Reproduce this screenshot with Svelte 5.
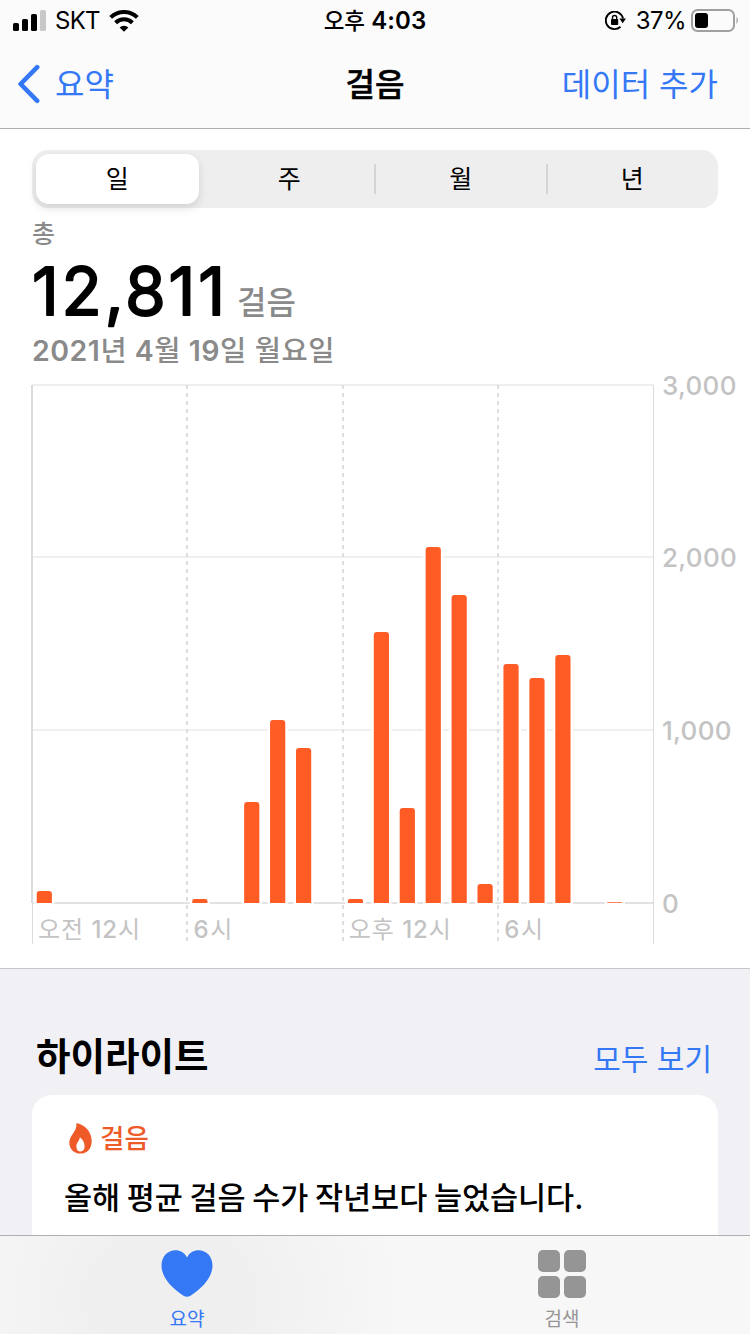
<script lang="ts">
  const ranges = ['일', '주', '월', '년'];
  let selected = $state(0);

  // steps per hour, starting at midnight
  const steps = [
    70, 0, 0, 0, 0, 0, 23, 0, 585, 1060, 898, 0,
    23, 1570, 550, 2062, 1784, 110, 1384, 1303, 1436, 0, 5, 0
  ];
  const ticks = [3000, 2000, 1000, 0];
  const hours = [
    { at: 0, num: '12', before: '오전', width: 102 },
    { at: 6, num: '6', before: '', width: 39 },
    { at: 12, num: '12', before: '오후', width: 102 },
    { at: 18, num: '6', before: '', width: 39 }
  ];

  const left = 32;
  const right = 653.5;
  const base = 525;
  const hourX = (h: number) => left + h * 25.9;
  const stepY = (n: number) => base - (n * 518) / 3000;

  function barPath(h: number, n: number) {
    const x = 36.7 + h * 25.93;
    const w = 15.2;
    const y = stepY(n);
    const r = Math.min(3, (base - y) / 2);
    return `M${x} ${base}V${y + r}q0 ${-r} ${r} ${-r}h${w - 2 * r}q${r} 0 ${r} ${r}V${base}z`;
  }

  const bars = steps.map((n, h) => ({ n, d: barPath(h, n) })).filter((b) => b.n > 0);
</script>

<div class="screen">
  <header>
    <div class="status">
      <div class="side">
        <svg width="34" height="22" viewBox="0 0 34 22">
          <rect x="0" y="13" width="6" height="8" rx="1.6" />
          <rect x="9" y="9" width="6" height="12" rx="1.6" />
          <rect x="18" y="4" width="6" height="17" rx="1.6" />
          <rect x="27" y="0" width="6" height="21" rx="1.6" fill="#c8c8c8" />
        </svg>
        <span class="carrier">SKT</span>
        <svg class="wifi" width="30" height="22" viewBox="0 0 30 22">
          <path d="M1.7 7.4a19 19 0 0 1 26.6 0" fill="none" stroke="#000" stroke-width="4" />
          <path d="M6.6 12.7a12 12 0 0 1 16.8 0" fill="none" stroke="#000" stroke-width="4" />
          <path d="M10.6 17.4a6.4 6.4 0 0 1 8.8 0L15 21.8z" />
        </svg>
      </div>
      <div class="time"><span>오후</span> 4:03</div>
      <div class="side end">
        <svg width="21" height="20" viewBox="0 0 21 20">
          <path d="M15.5 15.7A8.7 8.7 0 1 1 18 7.5" fill="none" stroke="#000" stroke-width="1.9" />
          <path d="M14.4 7.4h6.6l-3.3 4.8z" />
          <rect x="6" y="8" width="7.2" height="6" rx="0.8" />
          <path d="M7.5 8.5V6.6a2.1 2.1 0 0 1 4.2 0V8.5" fill="none" stroke="#000" stroke-width="1.4" />
        </svg>
        <span class="percent">37%</span>
        <svg width="48" height="24" viewBox="0 0 48 24">
          <rect x="1" y="1" width="42" height="21" rx="5.5" fill="none" stroke="#a0a0a0" stroke-width="2" />
          <rect x="4" y="4" width="13" height="15" rx="3" />
          <path d="M45.5 8a5 5 0 0 1 0 7z" fill="#a0a0a0" />
        </svg>
      </div>
    </div>
    <nav>
      <button class="back">
        <svg width="24" height="40" viewBox="0 0 24 40">
          <path d="M20.2 3.2L3.6 20l16.6 16.8" fill="none" stroke="#3478f6" stroke-width="4.6" stroke-linecap="round" stroke-linejoin="round" />
        </svg>
        <span>요약</span>
      </button>
      <h1>걸음</h1>
      <button class="add">데이터 추가</button>
    </nav>
  </header>

  <main>
    <section class="summary">
      <div class="segments">
        {#each ranges as label, i}
          <button
            class:active={i === selected}
            class:divided={i > 1 && i !== selected + 1}
            onclick={() => (selected = i)}>{label}</button>
        {/each}
      </div>
      <div class="caption">총</div>
      <div class="total">
        <svg width="194" height="66" viewBox="0 0 194 66">
          <text x="0" y="57" textLength="193">12,811</text>
        </svg>
        <span>걸음</span>
      </div>
      <div class="date">2021<b>년</b> 4<b>월</b> 19<b>일 월요일</b></div>
    </section>

    <svg class="chart" width="750" height="590" viewBox="0 0 750 590">
      {#each ticks as t}
        <path d="M{left} {Math.round(stepY(t) - 0.2)}H{right}" stroke={t === 0 ? '#e2e2e2' : '#efefef'} stroke-width="2" />
        <text class="tick" x="662" y={Math.round(stepY(t) - 0.2) + 10}>{t.toLocaleString('en-US')}</text>
      {/each}
      <path d="M32 7V525" stroke="#dcdcdc" stroke-width="2" />
      <path d="M32.5 525V566" stroke="#dcdcdc" />
      <path d="M653.5 7V566" stroke="#dcdcdc" />
      {#each hours as hour}
        {#if hour.at > 0}
          <path d="M{Math.round(hourX(hour.at))} 7V563" stroke="#dedede" stroke-width="2" stroke-dasharray="4 4" />
        {/if}
        <text class="hour" x={hourX(hour.at) + 6} y="560" textLength={hour.width}>
          {#if hour.before}{hour.before + ' '}{/if}<tspan class="num">{hour.num}</tspan>시</text>
      {/each}
      {#each bars as bar}
        <path d={bar.d} fill="#fff" stroke="#fff" stroke-width="5" />
        <path d={bar.d} fill="#ff5b25" />
      {/each}
    </svg>

    <section class="highlights">
      <div class="heading">
        <h2>하이라이트</h2>
        <button>모두 보기</button>
      </div>
      <article>
        <div class="topic">
          <svg width="23" height="31" viewBox="0 0 23 31">
            <path fill-rule="evenodd" d="M8.5 0.3C16 2 22.7 9 22.7 18C22.7 26 18 30.6 11.4 30.6C4.8 30.6 0.3 26 0.3 19.5C0.3 12.5 8 8.5 7.4 1.3Q7.4 0 8.5 0.3ZM10.9 14.3C10.6 17.8 7.4 19.5 7.4 23.5C7.4 26.7 9 28.5 11.5 28.5C14 28.5 15.6 26.5 15.6 23.3C15.6 19.5 13.5 16.3 10.9 14.3Z" fill="#ee5a28" />
          </svg>
          <span>걸음</span>
        </div>
        <p>올해 평균 걸음 수가 작년보다 늘었습니다.</p>
      </article>
    </section>
  </main>

  <footer>
    <button class="tab current">
      <svg width="52" height="48" viewBox="0 0 52 48">
        <path d="M26 7.5C23.5 2.8 19.2 0.3 14.5 0.3C6.5 0.3 0.5 6.8 0.5 15.5C0.5 28 11.5 38.5 22.5 45.7Q26 48 29.5 45.7C40.5 38.5 51.5 28 51.5 15.5C51.5 6.8 45.5 0.3 37.5 0.3C32.8 0.3 28.5 2.8 26 7.5Z" fill="#3478f6" />
      </svg>
      <span>요약</span>
    </button>
    <button class="tab">
      <svg width="48" height="48" viewBox="0 0 48 48" fill="#959595">
        <rect width="22" height="22" rx="5" />
        <rect x="26" width="22" height="22" rx="5" />
        <rect y="26" width="22" height="22" rx="5" />
        <rect x="26" y="26" width="22" height="22" rx="5" />
      </svg>
      <span>검색</span>
    </button>
  </footer>
</div>

<style>
  :global(body) {
    margin: 0;
    overflow: hidden;
  }

  .screen {
    display: flex;
    flex-direction: column;
    width: 750px;
    height: 1334px;
    overflow: hidden;
    background: #f1f0f5;
    color: #000;
    font-family: Inter, 'Noto Sans CJK KR', sans-serif;
  }

  svg {
    display: block;
    flex: none;
  }

  button {
    padding: 0;
    border: 0;
    background: none;
    color: #3478f6;
    font: inherit;
    cursor: pointer;
  }

  h1, h2, p {
    margin: 0;
  }

  header {
    flex: none;
    box-sizing: border-box;
    height: 129px;
    border-bottom: 1px solid #b0b0b0;
    background: #fbfbfb;
  }

  .status {
    display: grid;
    grid-template-columns: 1fr auto 1fr;
    align-items: center;
    height: 40px;
    padding: 0 11px 0 13px;
    font-size: 24px;
    line-height: 40px;
  }

  .side {
    display: flex;
    align-items: center;
  }

  .end {
    justify-content: flex-end;
  }

  .carrier {
    margin-left: 8px;
    padding-top: 1px;
    letter-spacing: -0.7px;
  }

  .wifi {
    margin-left: 9px;
  }

  .time {
    padding: 1px 2px 0 0;
    font-weight: 600;
    letter-spacing: 0.1px;
  }

  .time span {
    font-size: 22.5px;
    font-weight: 500;
    letter-spacing: 0;
  }

  .percent {
    margin: 0 5px 0 10px;
    padding-top: 1px;
    letter-spacing: -0.6px;
  }

  nav {
    display: grid;
    grid-template-columns: 1fr auto 1fr;
    align-items: center;
    height: 88px;
    padding: 0 32px 0 17px;
    font-size: 32px;
    line-height: 86px;
  }

  .back {
    display: flex;
    align-items: center;
    gap: 14px;
  }

  .back span,
  .add {
    padding-top: 1px;
  }

  h1 {
    padding: 2px 0 0 15px;
    font-size: 32px;
    font-weight: 500;
    -webkit-text-stroke: 0.5px;
  }

  .add {
    justify-self: end;
  }

  main {
    flex: 1;
    min-height: 0;
    overflow: hidden;
  }

  .summary {
    height: 249px;
    padding: 21px 32px 0;
    box-sizing: border-box;
    background: #fff;
    color: #8a8a8a;
  }

  .segments {
    display: grid;
    grid-template-columns: repeat(4, 1fr);
    height: 58px;
    border-radius: 16px;
    background: #eee;
  }

  .segments button {
    display: flex;
    align-items: center;
    justify-content: center;
    color: #000;
    font-size: 25px;
    line-height: 50px;
  }

  .segments .active {
    margin: 4px 5px 4px 4px;
    border-radius: 13px;
    background: #fff;
    box-shadow: 0 4px 10px rgba(0, 0, 0, 0.12);
  }

  .divided::before {
    content: '';
    width: 2px;
    height: 30px;
    margin-left: -1px;
    margin-right: auto;
    background: #d5d5d5;
  }

  .divided::after {
    content: '';
    width: 1px;
    margin-left: auto;
  }

  .caption {
    height: 48px;
    padding-top: 2px;
    font-size: 25px;
    font-weight: 500;
    line-height: 48px;
  }

  .total {
    display: flex;
    height: 66px;
  }

  .total svg {
    overflow: visible;
  }

  .total text {
    fill: #000;
    stroke: #000;
    stroke-width: 1.8px;
    stroke-linejoin: round;
    font-size: 66px;
    font-weight: 400;
  }

  .total span {
    padding-top: 12px;
    margin-left: 11px;
    font-size: 32px;
    font-weight: 500;
    line-height: 66px;
  }

  .date {
    height: 46px;
    padding-top: 4px;
    font-size: 28.5px;
    font-weight: 600;
    line-height: 46px;
    letter-spacing: 0.5px;
  }

  .date b {
    font-weight: 500;
  }

  .chart {
    overflow: visible;
    background: #fff;
    border-bottom: 1px solid #c6c6c8;
  }

  .tick {
    fill: #c3c3c3;
    font-size: 26px;
    font-weight: 500;
    letter-spacing: 0.3px;
  }

  .hour {
    fill: #c3c3c3;
    font-size: 24px;
  }

  .num {
    font-weight: 500;
  }

  .heading {
    display: flex;
    align-items: center;
    justify-content: space-between;
    height: 78px;
    padding: 48px 38px 0 36px;
  }

  h2 {
    padding-top: 2px;
    font-size: 37.5px;
    font-weight: 700;
    line-height: 78px;
  }

  .heading button {
    padding-top: 2px;
    font-size: 30px;
  }

  article {
    margin: 0 32px;
    padding: 24px 32px;
    height: 200px;
    border-radius: 20px;
    background: #fff;
  }

  .topic {
    display: flex;
    align-items: center;
    gap: 8px;
    height: 38px;
    padding-left: 5px;
    color: #ee5a28;
    font-size: 26.5px;
    font-weight: 500;
    line-height: 38px;
  }

  p {
    margin-top: 19px;
    font-size: 30.5px;
    font-weight: 500;
    line-height: 44px;
    word-spacing: -1.5px;
    white-space: nowrap;
  }

  footer {
    display: grid;
    flex: none;
    grid-template-columns: 374px 376px;
    box-sizing: border-box;
    height: 99px;
    border-top: 1px solid #b0b0b0;
    background: radial-gradient(ellipse 230px 190px at 170px 60px, #efefef 30%, #f7f7f7);
  }

  .tab {
    display: flex;
    flex-direction: column;
    align-items: center;
    padding-top: 14px;
    color: #959595;
    font-size: 19px;
    line-height: 44px;
  }

  .current {
    color: #3478f6;
  }
</style>
